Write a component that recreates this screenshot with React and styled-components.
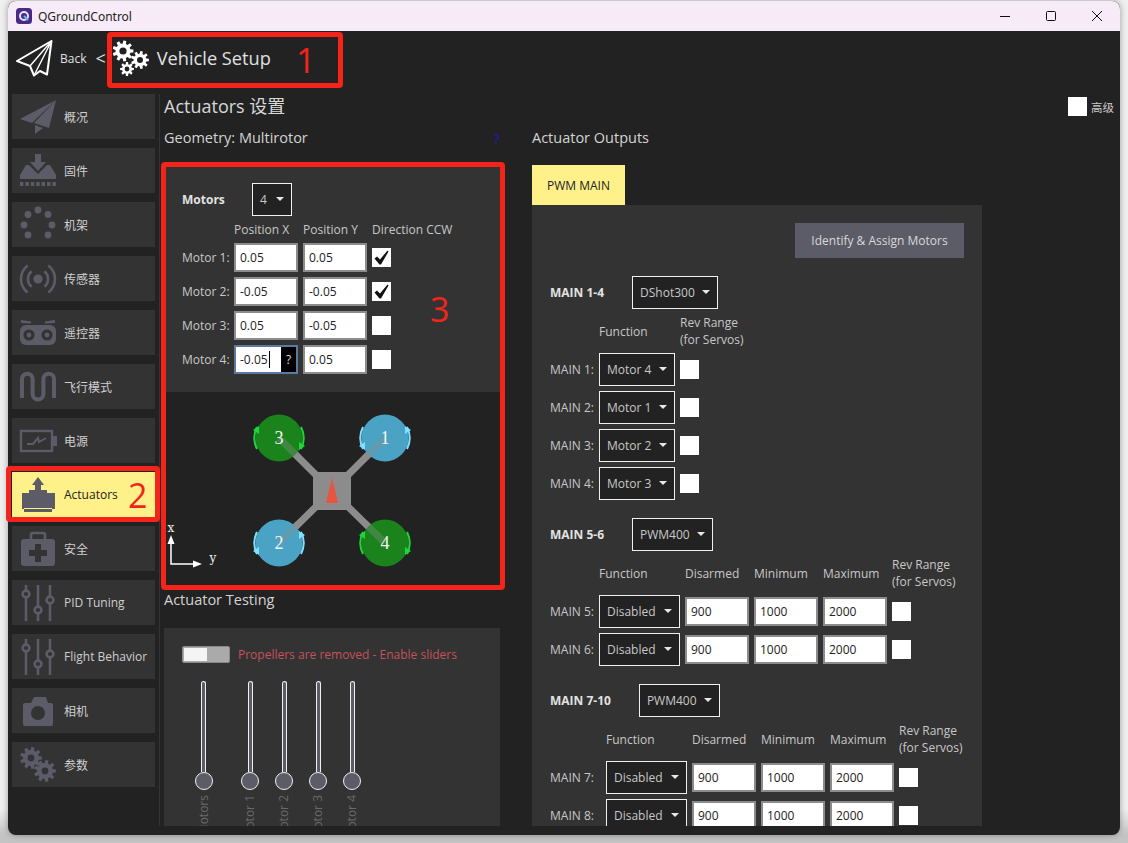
import React from "react";
import styled, { createGlobalStyle } from "styled-components";

const GlobalStyle = createGlobalStyle`
  html, body {
    margin: 0;
    padding: 0;
    background: #ededed;
  }
  * {
    box-sizing: border-box;
  }
`;

const ICON = "#5c5c68";
const FONT = `"Open Sans", "Noto Sans CJK SC", sans-serif`;

// builds a cog outline with a round hole, used by every gear icon
const gearPath = (cx, cy, outer, inner, hole, teeth) => {
  const step = (Math.PI * 2) / teeth;
  let d = "";
  for (let i = 0; i < teeth; i++) {
    const a = i * step;
    const pts = [
      [inner, a - step * 0.32],
      [outer, a - step * 0.2],
      [outer, a + step * 0.2],
      [inner, a + step * 0.32],
    ];
    pts.forEach(([r, t], j) => {
      const x = (cx + r * Math.cos(t)).toFixed(2);
      const y = (cy + r * Math.sin(t)).toFixed(2);
      d += `${i === 0 && j === 0 ? "M" : "L"}${x} ${y} `;
    });
  }
  d += `Z M${cx + hole} ${cy} A${hole} ${hole} 0 1 0 ${cx - hole} ${cy} A${hole} ${hole} 0 1 0 ${cx + hole} ${cy} Z`;
  return d;
};

const Page = styled.div`
  position: relative;
  width: 1128px;
  height: 843px;
  padding: 1px 8px 8px;
  overflow: hidden;
  font-family: ${FONT};
  background: linear-gradient(#efefef 0 96%, #c4c4c4 99%);
`;

const Window = styled.div`
  width: 1112px;
  height: 834px;
  display: flex;
  flex-direction: column;
  background: #222222;
  border-radius: 8px;
  overflow: hidden;
  box-shadow: 0 0 6px rgba(0, 0, 0, 0.35);
`;

const TitleBar = styled.div`
  height: 30px;
  flex: none;
  display: flex;
  align-items: center;
  padding-left: 8px;
  background: #f6ebf6;
`;

const TitleText = styled.span`
  margin-left: 6px;
  font: 12px "Noto Sans", sans-serif;
  color: #222;
`;

const WinButtons = styled.div`
  margin-left: auto;
  display: flex;
`;

const WinButton = styled.div`
  width: 46px;
  height: 30px;
  display: flex;
  align-items: center;
  justify-content: center;
`;

const Header = styled.div`
  height: 57px;
  flex: none;
  display: flex;
  align-items: center;
  padding: 0 0 3px 8px;
  color: #e0e0e0;
`;

const BackText = styled.span`
  margin-left: 7px;
  font-size: 12px;
`;

const Chevron = styled.span`
  margin: 0 7px 0 9px;
  font-size: 18px;
  line-height: 20px;
`;

const HeaderTitle = styled.span`
  margin-left: 8px;
  font-size: 18.2px;
`;

const Body = styled.div`
  flex: 1;
  min-height: 0;
  display: flex;
  padding: 6px 0 9px 4px;
`;

const Sidebar = styled.div`
  width: 148px;
  flex: none;
  display: flex;
  flex-direction: column;
  gap: 9px;
  padding-right: 4px;
  border-right: 1px solid #343434;
`;

const NavButton = styled.div`
  width: 143px;
  height: 45px;
  flex: none;
  display: flex;
  align-items: center;
  padding-left: 6px;
  gap: 6px;
  font-size: 12px;
  white-space: nowrap;
  background: ${(p) => (p.$active ? "#fff18a" : "#333333")};
  color: ${(p) => (p.$active ? "#222222" : "#cfcfcf")};
`;

const Main = styled.div`
  flex: 1;
  min-width: 0;
  display: flex;
  flex-direction: column;
  padding: 0 6px 0 4px;
  color: #d0d0d0;
`;

const TitleRow = styled.div`
  height: 34px;
  flex: none;
  display: flex;
  align-items: flex-start;
  justify-content: space-between;
`;

const PageTitle = styled.div`
  font-size: 18px;
  line-height: 24px;
  color: #d8d8d8;
`;

const Advanced = styled.div`
  display: flex;
  align-items: center;
  gap: 4px;
  margin-top: 3px;
  font-size: 11.5px;
  color: #c8c8c8;
`;

const Columns = styled.div`
  flex: 1;
  min-height: 0;
  display: flex;
  gap: 32px;
`;

const LeftColumn = styled.div`
  width: 336px;
  flex: none;
  display: flex;
  flex-direction: column;
`;

const RightColumn = styled.div`
  width: 450px;
  flex: none;
  display: flex;
  flex-direction: column;
`;

const SectionTitle = styled.div`
  height: 20px;
  flex: none;
  display: flex;
  justify-content: space-between;
  font-size: 14.5px;
  line-height: 20px;
  color: #d4d4d4;
`;

const HelpMark = styled.span`
  color: #1c1cb0;
  font-size: 15px;
`;

const GeometryPanel = styled.div`
  margin-top: 16px;
  padding: 19px 18px 18px;
  background: #333333;
  font-size: 12px;
`;

const MotorCount = styled.div`
  display: flex;
  align-items: center;
  margin-bottom: 5px;
`;

const BoldLabel = styled.span`
  font-weight: 700;
  font-size: 12px;
  color: #e2e2e2;
  min-width: ${(p) => p.$min || 0}px;
  margin-right: ${(p) => p.$gap || 0}px;
`;

const Grid = styled.div`
  display: grid;
  grid-template-columns: ${(p) => p.$cols};
  gap: 5px;
  align-items: center;
  justify-content: start;
  font-size: 12px;
  line-height: 17px;
`;

const Cell = styled.span`
  white-space: nowrap;
  color: #c8c8c8;
`;

const Field = styled.div`
  width: 64px;
  height: 29px;
  display: flex;
  align-items: center;
  padding-left: 4px;
  background: #fff;
  border: 2px solid ${(p) => (p.$focused ? "#5b7aa3" : "#8c8c8c")};
  color: #222;
  font-size: 12px;
`;

const TextCaret = styled.i`
  width: 1px;
  height: 17px;
  margin-left: 1px;
  background: #000;
`;

const HelpTag = styled.span`
  margin-left: auto;
  width: 15px;
  height: 25px;
  display: flex;
  align-items: center;
  justify-content: center;
  background: #000;
  color: #ddd;
  font-size: 12px;
`;

const CheckBox = styled.div`
  width: 19px;
  height: 19px;
  display: flex;
  align-items: center;
  justify-content: center;
  background: #fff;
`;

const Select = styled.div`
  height: 33px;
  width: ${(p) => (p.$width ? `${p.$width}px` : "auto")};
  flex: none;
  display: inline-flex;
  align-items: center;
  justify-content: space-between;
  gap: 7px;
  padding: 0 7px;
  background: #222;
  border: 1px solid #f0f0f0;
  color: #c8c8c8;
  font-size: 12px;
  white-space: nowrap;
`;

const Caret = styled.i`
  width: 0;
  height: 0;
  margin-top: -1px;
  border-left: 4px solid transparent;
  border-right: 4px solid transparent;
  border-top: 4px solid #e8e8e8;
`;

const Diagram = styled.svg`
  display: block;
  flex: none;
`;

const TestingTitle = styled(SectionTitle)`
  margin-top: 4px;
  margin-bottom: 18px;
`;

const TestingPanel = styled.div`
  flex: 1;
  min-height: 0;
  padding: 18px 18px 0;
  background: #333333;
  overflow: hidden;
`;

const EnableRow = styled.div`
  display: flex;
  align-items: center;
  gap: 8px;
  height: 17px;
  margin-bottom: 18px;
  font-size: 12px;
  color: #c4525c;
`;

const Toggle = styled.div`
  width: 48px;
  height: 17px;
  display: flex;
  padding: 1px;
  background: #aaaaaa;
  border: 1px solid #8a8a8a;
  border-radius: 2px;
`;

const ToggleKnob = styled.div`
  width: 23px;
  background: #f4f4f4;
`;

const Sliders = styled.div`
  display: flex;
`;

const SliderColumn = styled.div`
  width: ${(p) => (p.$lead ? 43 : 34)}px;
  margin-right: ${(p) => (p.$lead ? 8 : 0)}px;
  display: flex;
  flex-direction: column;
  align-items: center;
`;

const Track = styled.div`
  width: 5px;
  height: 91px;
  background: ${ICON};
  border: 1px solid #f0f0f0;
  border-bottom: none;
  border-radius: 3px 3px 0 0;
`;

const Thumb = styled.div`
  width: 18px;
  height: 18px;
  flex: none;
  border-radius: 50%;
  background: ${ICON};
  border: 1.5px solid #f0f0f0;
`;

const SliderLabel = styled.span`
  margin-top: 5px;
  writing-mode: vertical-rl;
  transform: rotate(180deg);
  font-size: 12px;
  line-height: 14px;
  white-space: nowrap;
  color: #6a6a6a;
`;

const TabRow = styled.div`
  margin-top: 17px;
  flex: none;
`;

const Tab = styled.div`
  width: 93px;
  height: 40px;
  display: flex;
  align-items: center;
  justify-content: center;
  background: #fff18a;
  color: #222;
  font-size: 12px;
`;

const OutputsPanel = styled.div`
  flex: 1;
  min-height: 0;
  padding: 18px 18px 0;
  background: #333333;
  overflow: hidden;
`;

const ButtonRow = styled.div`
  display: flex;
  justify-content: flex-end;
  margin-bottom: 18px;
`;

const IdentifyButton = styled.div`
  width: 169px;
  height: 35px;
  display: flex;
  align-items: center;
  justify-content: center;
  background: ${ICON};
  color: #d8d8d8;
  font-size: 12px;
`;

const Group = styled.div`
  margin-bottom: 18px;
`;

const GroupHead = styled.div`
  display: flex;
  align-items: center;
  margin-bottom: 5px;
`;

const HeaderCell = styled(Cell)`
  white-space: pre;
`;

const Plane = () => (
  <svg width="40" height="40" viewBox="0 0 40 40" fill={ICON}>
    <path d="M38 3 L2 22 L14 26 Z" />
    <path d="M38 3 L16 26 L31 31 Z" />
    <path d="M17 28 L17 37 L25 31 Z" />
  </svg>
);

const Firmware = () => (
  <svg width="40" height="40" viewBox="0 0 40 40" fill={ICON}>
    <path d="M17 3 H23 V11 H28 L20 20 L12 11 H17 Z" />
    <path d="M2 28 V24 L8 14 H11 L20 23 L29 14 H32 L38 24 V28 Z" />
    {[2, 7.4, 12.8, 18.2, 23.6, 29, 34.4].map((x) => (
      <rect key={x} x={x} y="31" width="3.4" height="4" />
    ))}
  </svg>
);

const Frames = () => (
  <svg width="40" height="40" viewBox="0 0 40 40" fill={ICON}>
    {[
      [20, 5],
      [30, 9.5],
      [34, 20],
      [30, 30],
      [10, 30],
      [6, 20],
      [10, 9.5],
    ].map(([x, y]) => (
      <circle key={x + "-" + y} cx={x} cy={y} r="3.4" />
    ))}
  </svg>
);

const Sensors = () => (
  <svg width="40" height="40" viewBox="0 0 40 40" fill="none" stroke={ICON} strokeWidth="2.6">
    <circle cx="20" cy="20" r="4.6" fill={ICON} stroke="none" />
    <path d="M13.6 12.3 A10 10 0 0 0 13.6 27.7 M26.4 12.3 A10 10 0 0 1 26.4 27.7" />
    <path d="M9.7 6.5 A17 17 0 0 0 9.7 33.5 M30.3 6.5 A17 17 0 0 1 30.3 33.5" />
  </svg>
);

const Remote = () => (
  <svg width="40" height="40" viewBox="0 0 40 40">
    <path fill={ICON} d="M3 7 L13 8.5 V10.5 L3 10 Z M37 7 L27 8.5 V10.5 L37 10 Z" />
    <rect x="2" y="12" width="36" height="20" rx="6" fill={ICON} />
    <circle cx="11" cy="22" r="5.6" fill="#333" />
    <circle cx="11" cy="22" r="2.4" fill={ICON} />
    <circle cx="29" cy="22" r="5.6" fill="#333" />
    <circle cx="29" cy="22" r="2.4" fill={ICON} />
  </svg>
);

const Wave = () => (
  <svg width="40" height="40" viewBox="0 0 40 40" fill="none" stroke={ICON} strokeWidth="4">
    <path d="M4 31 V12 A5.3 5.3 0 0 1 14.6 12 V27 A5.3 5.3 0 0 0 25.4 27 V12 A5.3 5.3 0 0 1 36 12 V31" />
  </svg>
);

const Battery = () => (
  <svg width="40" height="40" viewBox="0 0 40 40" fill="none" stroke={ICON}>
    <rect x="3" y="10" width="31" height="20" strokeWidth="2.4" />
    <path d="M35 15 H39 V25 H35 Z" fill={ICON} stroke="none" />
    <path d="M9 23 H15 L20 17 L21 21 L28 17" strokeWidth="2" />
  </svg>
);

const Actuator = () => (
  <svg width="40" height="40" viewBox="0 0 40 40" fill={ICON}>
    <path d="M20 2 L26 10 H23 V15 H17 V10 H14 Z" />
    <path d="M11 15 H29 V18 H37 V34 H34 V37 H6 V34 H4 V18 H11 Z" />
    <rect x="6" y="33" width="28" height="1" fill="#fff18a" />
  </svg>
);

const Safety = () => (
  <svg width="40" height="40" viewBox="0 0 40 40">
    <path fill="none" stroke={ICON} strokeWidth="2.6" d="M13 10 V6 Q13 4 15 4 H25 Q27 4 27 6 V10" />
    <rect x="3" y="10" width="34" height="27" rx="3" fill={ICON} />
    <path fill="#333" d="M17 15 H23 V21 H29 V27 H23 V33 H17 V27 H11 V21 H17 Z" />
  </svg>
);

const SlidersIcon = () => (
  <svg width="40" height="40" viewBox="0 0 40 40" fill="none" stroke={ICON} strokeWidth="2.6">
    <path d="M8 2 V38 M20 2 V38 M32 2 V38" />
    <circle cx="8" cy="11" r="3.4" fill="#333" />
    <circle cx="20" cy="27" r="3.4" fill="#333" />
    <circle cx="32" cy="17" r="3.4" fill="#333" />
  </svg>
);

const Camera = () => (
  <svg width="40" height="40" viewBox="0 0 40 40">
    <path
      fill={ICON}
      d="M7 12 H13 L16 6 H28 L30 12 H33 Q35 12 35 14 V33 Q35 35 33 35 H7 Q5 35 5 33 V14 Q5 12 7 12 Z"
    />
    <circle cx="20" cy="22" r="7" fill="#333" />
    <circle cx="31" cy="10" r="1" fill="#333" />
  </svg>
);

const Params = () => (
  <svg width="40" height="40" viewBox="0 0 40 40" fill={ICON} fillRule="evenodd">
    <path d={gearPath(13, 13, 11, 8, 3.4, 9)} />
    <path d={gearPath(27, 26, 11, 8, 3.4, 9)} />
  </svg>
);

const navItems = [
  { label: "概况", icon: Plane },
  { label: "固件", icon: Firmware },
  { label: "机架", icon: Frames },
  { label: "传感器", icon: Sensors },
  { label: "遥控器", icon: Remote },
  { label: "飞行模式", icon: Wave },
  { label: "电源", icon: Battery },
  { label: "Actuators", icon: Actuator, active: true },
  { label: "安全", icon: Safety },
  { label: "PID Tuning", icon: SlidersIcon },
  { label: "Flight Behavior", icon: SlidersIcon },
  { label: "相机", icon: Camera },
  { label: "参数", icon: Params },
];

const motors = [
  { name: "Motor 1:", x: "0.05", y: "0.05", ccw: true },
  { name: "Motor 2:", x: "-0.05", y: "-0.05", ccw: true },
  { name: "Motor 3:", x: "0.05", y: "-0.05" },
  { name: "Motor 4:", x: "-0.05", y: "0.05", focused: true },
];

const groups = [
  {
    name: "MAIN 1-4",
    protocol: "DShot300",
    cols: "44px 76px 19px",
    rows: [
      ["MAIN 1:", "Motor 4"],
      ["MAIN 2:", "Motor 1"],
      ["MAIN 3:", "Motor 2"],
      ["MAIN 4:", "Motor 3"],
    ],
  },
  {
    name: "MAIN 5-6",
    protocol: "PWM400",
    cols: "44px 81px 64px 64px 64px 19px",
    limits: true,
    rows: [
      ["MAIN 5:", "Disabled"],
      ["MAIN 6:", "Disabled"],
    ],
  },
  {
    name: "MAIN 7-10",
    protocol: "PWM400",
    cols: "51px 81px 64px 64px 64px 19px",
    limits: true,
    rows: [
      ["MAIN 7:", "Disabled"],
      ["MAIN 8:", "Disabled"],
    ],
  },
];

const CheckMark = () => (
  <svg width="17" height="17" viewBox="0 0 17 17">
    <path fill="#111" d="M1.5 9.5 L4 7.5 L7 10.5 L14.5 1.5 L15.5 2.5 L8 15.5 L6.5 15.5 Z" />
  </svg>
);

const Rotor = ({ cx, cy, label, green }) => {
  const body = green ? "#1a831c" : "#4aa3c4";
  const light = green ? "#1fd63a" : "#7fe0ff";
  // arrow heads sit on opposite sides, mirrored for the two spin directions
  const s = green ? -1 : 1;
  return (
    <g>
      <circle cx={cx} cy={cy} r="23.5" fill={body} />
      <path
        d={`M${cx + 22} ${cy - 11} A24.5 24.5 0 0 1 ${cx + 22} ${cy + 11}`}
        fill="none"
        stroke={light}
        strokeWidth="2"
      />
      <path
        d={`M${cx - 22} ${cy - 11} A24.5 24.5 0 0 0 ${cx - 22} ${cy + 11}`}
        fill="none"
        stroke={light}
        strokeWidth="2"
      />
      <path
        fill={light}
        d={`M${cx + s * 26} ${cy - 8} L${cx + s * 20} ${cy - 12} L${cx + s * 20} ${cy - 4} Z`}
      />
      <path
        fill={light}
        d={`M${cx - s * 26} ${cy + 8} L${cx - s * 20} ${cy + 4} L${cx - s * 20} ${cy + 12} Z`}
      />
      <line
        x1={cx}
        y1={cy}
        x2={cx + (cx < 168 ? 20 : -20)}
        y2={cy + (cy < 99 ? 20 : -20)}
        stroke="#8c8c8c"
        strokeOpacity="0.35"
        strokeWidth="7"
      />
      <text x={cx} y={cy + 6} textAnchor="middle" fontFamily="'Liberation Serif', serif" fontSize="18" fill="#f4f4f4">
        {label}
      </text>
    </g>
  );
};

const VehicleDiagram = () => (
  <Diagram width="336" height="194" viewBox="0 0 336 194">
    <g stroke="#8c8c8c" strokeWidth="7">
      <line x1="168" y1="99" x2="115" y2="46" />
      <line x1="168" y1="99" x2="221" y2="46" />
      <line x1="168" y1="99" x2="115" y2="151" />
      <line x1="168" y1="99" x2="221" y2="151" />
    </g>
    <Rotor cx={115} cy={46} label="3" green />
    <Rotor cx={221} cy={46} label="1" />
    <Rotor cx={115} cy={151} label="2" />
    <Rotor cx={221} cy={151} label="4" green />
    <rect x="149" y="80" width="38" height="38" fill="#8c8c8c" />
    <path d="M168 86 L174 111 H162 Z" fill="#e8543f" />
    <g stroke="#fff" strokeWidth="1.5" fill="#fff">
      <path d="M7 148 V172 H30" fill="none" />
      <path d="M7 143 L10.5 152 H3.5 Z" stroke="none" />
      <path d="M38 172 L29 168.5 V175.5 Z" stroke="none" />
    </g>
    <text x="7" y="140" textAnchor="middle" fontFamily="'DejaVu Serif', serif" fontSize="12" fill="#f0f0f0">
      x
    </text>
    <text x="49" y="170" textAnchor="middle" fontFamily="'DejaVu Serif', serif" fontSize="12" fill="#f0f0f0">
      y
    </text>
  </Diagram>
);

const Annotation = styled.div`
  position: absolute;
  left: ${(p) => p.$x}px;
  top: ${(p) => p.$y}px;
  width: ${(p) => p.$w}px;
  height: ${(p) => p.$h}px;
  border: 5px solid #f5241a;
  border-radius: 4px;
`;

const AnnotationNumber = styled.div`
  position: absolute;
  left: ${(p) => p.$x}px;
  top: ${(p) => p.$y}px;
  font-size: 34px;
  line-height: 46px;
  color: #f5241a;
`;

const GroupBlock = ({ group }) => (
  <Group>
    <GroupHead>
      <BoldLabel $gap={28}>{group.name}</BoldLabel>
      <Select>
        {group.protocol}
        <Caret />
      </Select>
    </GroupHead>
    <Grid $cols={group.cols}>
      <span />
      <Cell>Function</Cell>
      {group.limits && (
        <>
          <Cell>Disarmed</Cell>
          <Cell>Minimum</Cell>
          <Cell>Maximum</Cell>
        </>
      )}
      <HeaderCell>{"Rev Range\n(for Servos)"}</HeaderCell>
      {group.rows.map(([name, fn]) => (
        <React.Fragment key={name}>
          <Cell>{name}</Cell>
          <Select>
            {fn}
            <Caret />
          </Select>
          {group.limits && (
            <>
              <Field>900</Field>
              <Field>1000</Field>
              <Field>2000</Field>
            </>
          )}
          <CheckBox />
        </React.Fragment>
      ))}
    </Grid>
  </Group>
);

export default function App() {
  return (
    <Page>
      <GlobalStyle />
      <Window>
        <TitleBar>
          <svg width="16" height="16" viewBox="0 0 16 16">
            <rect width="16" height="16" rx="3.5" fill="#4b2a86" />
            <circle cx="8" cy="8" r="4" fill="none" stroke="#dfe3f5" strokeWidth="2" />
            <path d="M8 8 L12 12" stroke="#6fb0e8" strokeWidth="2" />
          </svg>
          <TitleText>QGroundControl</TitleText>
          <WinButtons>
            <WinButton>
              <svg width="12" height="12" viewBox="0 0 12 12">
                <path d="M1 6.5 H11" stroke="#111" />
              </svg>
            </WinButton>
            <WinButton>
              <svg width="12" height="12" viewBox="0 0 12 12">
                <rect x="1.5" y="1.5" width="9" height="9" rx="1" fill="none" stroke="#111" />
              </svg>
            </WinButton>
            <WinButton>
              <svg width="12" height="12" viewBox="0 0 12 12">
                <path d="M1 1 L11 11 M11 1 L1 11" stroke="#111" />
              </svg>
            </WinButton>
          </WinButtons>
        </TitleBar>

        <Header>
          <svg width="37" height="37" viewBox="0 0 37 37" fill="none" stroke="#fff" strokeWidth="2" strokeLinejoin="round">
            <path d="M35.5 1 L1 21 L14 26 L18 35.5 L24 31 L31 34.5 Z" />
            <path d="M35.5 1 L14 26 M35.5 1 L18 35.5" strokeWidth="1.4" />
          </svg>
          <BackText>Back</BackText>
          <Chevron>&lt;</Chevron>
          <svg width="36" height="36" viewBox="0 0 36 36" fill="#fff" fillRule="evenodd">
            <path d={gearPath(10, 11, 10.5, 7.5, 3.6, 9)} />
            <path d={gearPath(27, 20, 9, 6.4, 3, 9)} />
            <path d={gearPath(14, 29, 7, 5, 2.4, 8)} />
          </svg>
          <HeaderTitle>Vehicle Setup</HeaderTitle>
        </Header>

        <Body>
          <Sidebar>
            {navItems.map(({ label, icon: Icon, active }) => (
              <NavButton key={label} $active={active}>
                <Icon />
                {label}
              </NavButton>
            ))}
          </Sidebar>

          <Main>
            <TitleRow>
              <PageTitle>Actuators 设置</PageTitle>
              <Advanced>
                <CheckBox />
                高级
              </Advanced>
            </TitleRow>

            <Columns>
              <LeftColumn>
                <SectionTitle>
                  Geometry: Multirotor
                  <HelpMark>?</HelpMark>
                </SectionTitle>
                <GeometryPanel>
                  <MotorCount>
                    <BoldLabel $min={70}>Motors</BoldLabel>
                    <Select $width={40}>
                      4
                      <Caret />
                    </Select>
                  </MotorCount>
                  <Grid $cols="47px 64px 64px auto">
                    <span />
                    <Cell>Position X</Cell>
                    <Cell>Position Y</Cell>
                    <Cell>Direction CCW</Cell>
                    {motors.map((m) => (
                      <React.Fragment key={m.name}>
                        <Cell>{m.name}</Cell>
                        <Field $focused={m.focused}>
                          {m.x}
                          {m.focused && (
                            <>
                              <TextCaret />
                              <HelpTag>?</HelpTag>
                            </>
                          )}
                        </Field>
                        <Field>{m.y}</Field>
                        <CheckBox>{m.ccw && <CheckMark />}</CheckBox>
                      </React.Fragment>
                    ))}
                  </Grid>
                </GeometryPanel>
                <VehicleDiagram />
                <TestingTitle>Actuator Testing</TestingTitle>
                <TestingPanel>
                  <EnableRow>
                    <Toggle>
                      <ToggleKnob />
                    </Toggle>
                    Propellers are removed - Enable sliders
                  </EnableRow>
                  <Sliders>
                    {["Motors", "Motor 1", "Motor 2", "Motor 3", "Motor 4"].map((name, i) => (
                      <SliderColumn key={name} $lead={i === 0}>
                        <Track />
                        <Thumb />
                        <SliderLabel>{name}</SliderLabel>
                      </SliderColumn>
                    ))}
                  </Sliders>
                </TestingPanel>
              </LeftColumn>

              <RightColumn>
                <SectionTitle>Actuator Outputs</SectionTitle>
                <TabRow>
                  <Tab>PWM MAIN</Tab>
                </TabRow>
                <OutputsPanel>
                  <ButtonRow>
                    <IdentifyButton>Identify &amp; Assign Motors</IdentifyButton>
                  </ButtonRow>
                  {groups.map((g) => (
                    <GroupBlock key={g.name} group={g} />
                  ))}
                </OutputsPanel>
              </RightColumn>
            </Columns>
          </Main>
        </Body>
      </Window>

      <Annotation $x={107} $y={32} $w={236} $h={56} />
      <AnnotationNumber $x={296} $y={37}>1</AnnotationNumber>
      <Annotation $x={6} $y={466} $w={154} $h={56} />
      <AnnotationNumber $x={128} $y={472}>2</AnnotationNumber>
      <Annotation $x={161} $y={162} $w={344} $h={428} />
      <AnnotationNumber $x={430} $y={286}>3</AnnotationNumber>
    </Page>
  );
}
